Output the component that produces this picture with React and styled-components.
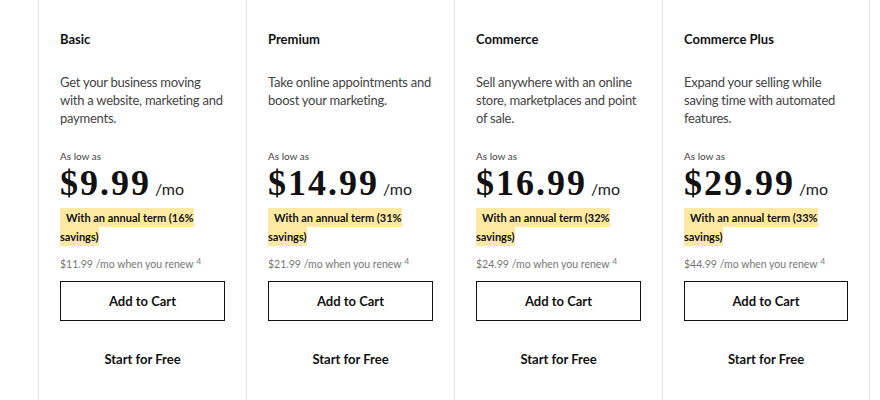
import React from "react";
import styled, { createGlobalStyle } from "styled-components";

const Global = createGlobalStyle`
  html, body { margin: 0; padding: 0; background: #fff; }
  body { font-family: Lato, "Noto Sans", "Liberation Sans", sans-serif; color: #111; overflow: hidden; }
`;

const Page = styled.div`
  width: 880px;
  height: 400px;
  overflow: hidden;
  padding-left: 38px;
  box-sizing: border-box;
`;

const Grid = styled.div`
  display: grid;
  grid-template-columns: repeat(4, 208px);
`;

const Card = styled.div`
  box-sizing: border-box;
  height: 420px;
  border-left: 1px solid #e6e6e6;
  ${(p) => (p.$last ? "border-right: 1px solid #e6e6e6;" : "")}
  padding: 30px 21px 0 21px;
  display: flex;
  flex-direction: column;
`;

const Title = styled.div`
  font-size: 13px;
  font-weight: 700;
  line-height: 18px;
  color: #111;
`;

const Desc = styled.p`
  margin: 25px 0 0 0;
  font-size: 13px;
  letter-spacing: -0.25px;
  line-height: 18px;
  color: #444;
  min-height: 54px;
`;

const Low = styled.div`
  margin-top: 23px;
  font-size: 10px;
  line-height: 12px;
  color: #444;
`;

const PriceRow = styled.div`
  display: flex;
  align-items: baseline;
  gap: 4px;
  height: 34px;
  margin-top: 4px;
`;

const Amount = styled.span`
  font-family: "Liberation Serif", "Times New Roman", serif;
  font-weight: 700;
  font-size: 36px;
  letter-spacing: 2px;
  line-height: 34px;
  color: #111;
`;

const Per = styled.span`
  font-size: 16px;
  line-height: 20px;
  color: #222;
`;

const TermWrap = styled.div`
  margin-top: 8px;
  font-size: 11px;
  font-weight: 700;
  line-height: 19px;
  color: #111;
  max-width: 140px;
`;

const Highlight = styled.span`
  background: #fde9a2;
  padding: 3px 0 3px 6px;
`;

const Renew = styled.div`
  margin-top: 8px;
  font-size: 10.5px;
  line-height: 14px;
  color: #767676;
  sup { font-size: 8px; vertical-align: 4px; margin-left: 3px; }
`;

const CartButton = styled.button`
  margin-top: 10px;
  height: 40px;
  width: 100%;
  box-sizing: border-box;
  background: #fff;
  border: 1.5px solid #111;
  border-radius: 0;
  font-family: inherit;
  font-size: 13px;
  font-weight: 700;
  color: #111;
  cursor: pointer;
`;

const FreeLink = styled.div`
  margin-top: 29px;
  text-align: center;
  font-size: 13px;
  font-weight: 700;
  line-height: 18px;
  color: #111;
`;

const plans = [
  { name: "Basic", desc: "Get your business moving with a website, marketing and payments.", price: "$9.99", pct: "16%", renew: "$11.99" },
  { name: "Premium", desc: "Take online appointments and boost your marketing.", price: "$14.99", pct: "31%", renew: "$21.99" },
  { name: "Commerce", desc: "Sell anywhere with an online store, marketplaces and point of sale.", price: "$16.99", pct: "32%", renew: "$24.99" },
  { name: "Commerce Plus", desc: "Expand your selling while saving time with automated features.", price: "$29.99", pct: "33%", renew: "$44.99" },
];

export default function App() {
  return (
    <Page>
      <Global />
      <Grid>
        {plans.map((p, i) => (
          <Card key={p.name} $last={i === plans.length - 1}>
            <Title>{p.name}</Title>
            <Desc>{p.desc}</Desc>
            <Low>As low as</Low>
            <PriceRow>
              <Amount>{p.price}</Amount>
              <Per>/mo</Per>
            </PriceRow>
            <TermWrap>
              <Highlight>With an annual term ({p.pct} savings)</Highlight>
            </TermWrap>
            <Renew>
              {p.renew} /mo when you renew<sup>4</sup>
            </Renew>
            <CartButton>Add to Cart</CartButton>
            <FreeLink>Start for Free</FreeLink>
          </Card>
        ))}
      </Grid>
    </Page>
  );
}
